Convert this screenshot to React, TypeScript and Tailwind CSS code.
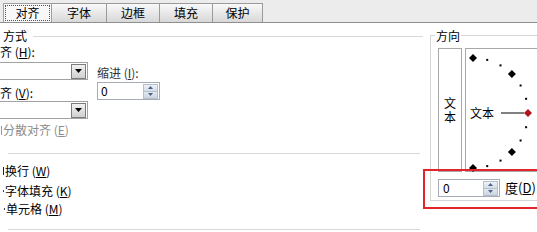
import React from "react";

const M = ({ c }: { c: string }) => (
  <>
    (<span className="underline underline-offset-[1px]">{c}</span>)
  </>
);

function Combo() {
  return (
    <div className="ml-[-20px] flex h-[18px] w-[108px] items-center justify-end border border-[#a2a2a2] bg-white pr-px">
      <div className="flex h-[15px] w-[15px] items-center justify-center border border-[#7c7c7c] bg-linear-to-b from-[#f2f2f2] to-[#cfcfcf]">
        <svg width="7" height="4" viewBox="0 0 7 4">
          <polygon points="0,0 7,0 3.5,4" fill="#000" />
        </svg>
      </div>
    </div>
  );
}

function SpinBtns() {
  return (
    <div className="flex h-[15px] w-[15px] flex-col border border-[#b5c0cc]">
      <div className="flex flex-1 items-center justify-center border-b border-[#b5c0cc] bg-linear-to-b from-[#eef2f6] to-[#d4dde7]">
        <svg width="5" height="3" viewBox="0 0 5 3">
          <polygon points="2.5,0 5,3 0,3" fill="#4a6287" />
        </svg>
      </div>
      <div className="flex flex-1 items-center justify-center bg-linear-to-b from-[#e3e9ef] to-[#cbd5e0]">
        <svg width="5" height="3" viewBox="0 0 5 3">
          <polygon points="0,0 5,0 2.5,3" fill="#4a6287" />
        </svg>
      </div>
    </div>
  );
}

function Diamond({ x, y, fill }: { x: number; y: number; fill: string }) {
  return <polygon points={`${x},${y - 4} ${x + 4},${y} ${x},${y + 4} ${x - 4},${y}`} fill={fill} />;
}

function Dial() {
  const cx = 7;
  const cy = 64;
  const r = 55;
  const items = [];
  for (let a = 90; a >= -90; a -= 15) {
    const rad = (a * Math.PI) / 180;
    const x = Math.round((cx + r * Math.cos(rad)) * 10) / 10;
    const y = Math.round((cy - r * Math.sin(rad)) * 10) / 10;
    if (a === 0) {
      items.push(<Diamond key={a} x={x} y={y} fill="#b0141c" />);
    } else if (Math.abs(a) === 90 || Math.abs(a) === 45) {
      items.push(<Diamond key={a} x={x} y={y} fill="#000" />);
    } else {
      items.push(<rect key={a} x={x - 1} y={y - 1} width="2" height="2" fill="#000" />);
    }
  }
  return (
    <div className="relative h-[124px] flex-1 border border-r-0 border-[#a8a8a8] bg-white">
      <svg className="absolute left-0 top-0 overflow-visible" width="80" height="124" viewBox="0 0 80 124">
        <line x1="35" y1="64" x2="58" y2="64" stroke="#000" strokeWidth="1" />
        {items}
      </svg>
      <span className="absolute left-[4px] top-[57px] text-[12px] leading-[13px]">文本</span>
    </div>
  );
}

export default function App() {
  const tabs = [
    { t: "字体", w: "w-[55px]" },
    { t: "边框", w: "w-[53px]" },
    { t: "填充", w: "w-[53px]" },
    { t: "保护", w: "w-[50px]" },
  ];
  return (
    <div className="relative h-[232px] w-[537px] overflow-hidden bg-white font-['Noto_Sans_CJK_SC',sans-serif] text-[12px] leading-[12px] text-black">
      {/* tab strip */}
      <div className="flex h-[23px] items-end border-b border-[#8f8f8f] bg-[#ececec] pl-[3px]">
        <div className="flex h-[19px] w-[49px] border-x border-t border-[#a0a0a0] bg-[#f8f8f8] p-px">
          <div className="flex flex-1 items-center justify-center border border-dotted border-[#555]">
            对齐
          </div>
        </div>
        {tabs.map((tb) => (
          <div
            key={tb.t}
            className={`flex h-[19px] ${tb.w} items-center justify-center border-r border-t border-[#9a9a9a] bg-linear-to-b from-[#f9f9f9] to-[#d8d8d8]`}
          >
            {tb.t}
          </div>
        ))}
      </div>

      <div className="flex">
        {/* left column */}
        <div className="flex w-[423px] shrink-0 flex-col">
          <div className="mt-[6px] flex h-[14px] items-center">
            <span className="ml-[3px] whitespace-nowrap">方式</span>
            <div className="ml-[6px] h-px flex-1 bg-[#d8d8d8]" />
          </div>
          <div className="mt-[3px] h-[12px] whitespace-nowrap">
            齐 <M c="H" />:
          </div>
          <div className="mt-[4px] flex items-start">
            <div className="flex w-[88px] flex-col">
              <Combo />
              <div className="mt-[7px] h-[12px] whitespace-nowrap">
                齐 <M c="V" />:
              </div>
              <div className="mt-[2px]">
                <Combo />
              </div>
            </div>
            <div className="ml-[9px] flex flex-col">
              <div className="mt-[5px] h-[12px] whitespace-nowrap text-[#333]">
                缩进 <M c="I" />:
              </div>
              <div className="mt-[3px] flex h-[18px] w-[63px] items-center justify-between border border-[#a5acb5] bg-white pl-[3px] pr-px">
                <span>0</span>
                <SpinBtns />
              </div>
            </div>
          </div>
          <div className="mt-[5px] flex h-[12px] items-center whitespace-nowrap text-[#8c8c8c]">
            <span className="ml-px h-[9px] w-px bg-[#9a9a9a]" />
            <span className="ml-[1px]">分散对齐 <M c="E" /></span>
          </div>
          <div className="mt-[17px] ml-[8px] mr-[3px] h-px bg-[#d8d8d8]" />
          <div className="mt-[11px] flex h-[12px] items-center whitespace-nowrap">
            <span className="ml-[3px] h-[8px] w-px bg-[#222]" />
            <span className="ml-px">换行 <M c="W" /></span>
          </div>
          <div className="mt-[8px] flex h-[12px] items-center whitespace-nowrap">
            <span className="ml-[3px] h-[2px] w-px bg-[#444]" />
            <span className="ml-px">字体填充 <M c="K" /></span>
          </div>
          <div className="mt-[6px] flex h-[12px] items-center whitespace-nowrap">
            <span className="ml-[4px] h-[2px] w-px bg-[#444]" />
            <span className="ml-px">单元格 <M c="M" /></span>
          </div>
          <div className="mt-[14px] ml-[8px] mr-[3px] h-px bg-[#d8d8d8]" />
        </div>

        {/* right column */}
        <div className="flex-1">
          <div className="relative ml-[7px] mt-[12px] border-y border-l border-[#d5d5d5] pb-[3px] pl-[7px] pt-[12px]">
            <span className="absolute left-[4px] top-[-7px] bg-white px-px leading-[13px]">方向</span>
            <div className="flex gap-[3px]">
              <div className="flex h-[124px] w-[24px] flex-col items-center justify-center border border-[#a8a8a8] bg-white">
                <span className="leading-[14px]">文</span>
                <span className="leading-[14px]">本</span>
              </div>
              <Dial />
            </div>
            <div className="mt-[7px] flex items-center">
              <div className="flex h-[18px] w-[62px] items-center justify-between border border-[#a5acb5] bg-white pl-[4px] pr-px">
                <span>0</span>
                <SpinBtns />
              </div>
              <span className="ml-[5px] whitespace-nowrap text-[13px]">
                度<M c="D" />
              </span>
            </div>
          </div>
        </div>
      </div>

      {/* red highlight overlay */}
      <div className="absolute left-[423px] top-[169px] h-[40px] w-[130px] border-2 border-[#e3242b]" />
    </div>
  );
}
